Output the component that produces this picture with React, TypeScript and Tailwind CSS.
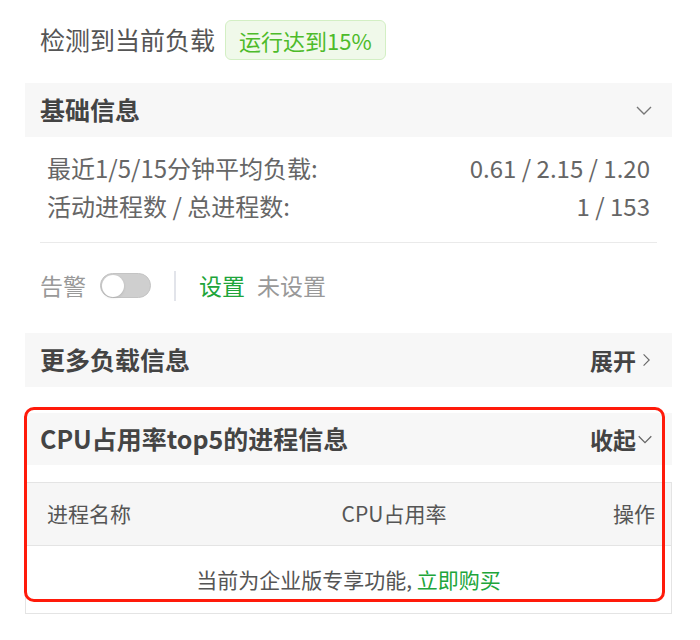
import React from 'react';

const font = { fontFamily: '"Noto Sans CJK SC", "Noto Sans", sans-serif' };

const ChevronDown: React.FC<{ className?: string }> = ({ className }) => (
  <svg viewBox="0 0 20 20" className={className} fill="none" stroke="currentColor" strokeWidth="1.4">
    <path d="M3 7l7 7 7-7" />
  </svg>
);

const ChevronRight: React.FC<{ className?: string }> = ({ className }) => (
  <svg viewBox="0 0 20 20" className={className} fill="none" stroke="currentColor" strokeWidth="1.4">
    <path d="M7 3l7 7-7 7" />
  </svg>
);

const SectionHead: React.FC<{ title: string; right?: React.ReactNode; h?: string }> = ({ title, right, h = 'h-[54px]' }) => (
  <div className={`flex items-center justify-between bg-[#f7f7f7] pl-[15px] pr-[18px] ${h}`}>
    <span className="text-[25px] font-bold text-[#444]">{title}</span>
    {right}
  </div>
);

export default function App() {
  return (
    <div style={font} className="w-[700px] h-[640px] bg-white pl-[25px] pr-[28px] pt-[20px] overflow-hidden">
      {/* top */}
      <div className="flex items-center gap-[10px] pl-[15px] h-[40px]">
        <span className="text-[25px] text-[#555]">检测到当前负载</span>
        <span className="h-[40px] px-[13px] flex items-center rounded-[6px] border border-[#d3efc4] bg-[#f0f9ea] text-[22px] text-[#4dbb2a]">
          运行达到15%
        </span>
      </div>

      <div className="mt-[23px]">
        <SectionHead title="基础信息" right={<ChevronDown className="w-[20px] h-[20px] text-[#777]" />} />
        <div className="px-[22px] pt-[12px] text-[24px] text-[#666]">
          <div className="flex justify-between h-[38px] items-center">
            <span>最近1/5/15分钟平均负载:</span>
            <span>0.61 / 2.15 / 1.20</span>
          </div>
          <div className="flex justify-between h-[38px] items-center">
            <span>活动进程数 / 总进程数:</span>
            <span>1 / 153</span>
          </div>
        </div>
        <div className="mx-[15px] mt-[17px] border-t border-[#eaeaea]" />
        <div className="flex items-center h-[90px] pb-[5px] pl-[15px] text-[23px]">
          <span className="text-[#999]">告警</span>
          <span className="ml-[14px] w-[51px] h-[25px] rounded-full bg-[#cfcfcf] border border-[#c4c4c4] flex items-center p-[1px]">
            <span className="w-[22px] h-[22px] rounded-full bg-white shadow-sm" />
          </span>
          <span className="ml-[23px] w-[2px] h-[30px] bg-[#e2e4ea]" />
          <span className="ml-[23px] text-[#20a53a]">设置</span>
          <span className="ml-[12px] text-[#999]">未设置</span>
        </div>
      </div>

      <SectionHead
        title="更多负载信息"
        right={
          <span className="flex items-center text-[23px] font-bold text-[#444]">
            展开
            <ChevronRight className="w-[16px] h-[18px] text-[#666] ml-[2px]" />
          </span>
        }
      />

      <div className="relative mt-[26px]">
        <SectionHead
          title="CPU占用率top5的进程信息"
          h="h-[52px]"
          right={
            <span className="flex items-center text-[23px] font-bold text-[#444]">
              收起
              <ChevronDown className="w-[18px] h-[18px] text-[#666]" />
            </span>
          }
        />
        <div className="mt-[17px] border border-[#e4e4e4]">
          <div className="grid grid-cols-[277px_140px_1fr] items-center h-[63px] bg-[#f6f6f6] border-b border-[#e4e4e4] pl-[21px] pr-[16px] text-[21px] text-[#555]">
            <span>进程名称</span>
            <span className="text-center whitespace-nowrap">CPU占用率</span>
            <span className="text-right">操作</span>
          </div>
          <div className="h-[67px] flex items-center justify-center text-[21px] text-[#555]">
            当前为企业版专享功能,&nbsp;<span className="text-[#20a53a]">立即购买</span>
          </div>
        </div>
        <div className="absolute left-[-1px] top-[-6px] w-[641px] h-[195px] border-[3px] border-[#ff1a0a] rounded-[10px] pointer-events-none" />
      </div>
    </div>
  );
}
